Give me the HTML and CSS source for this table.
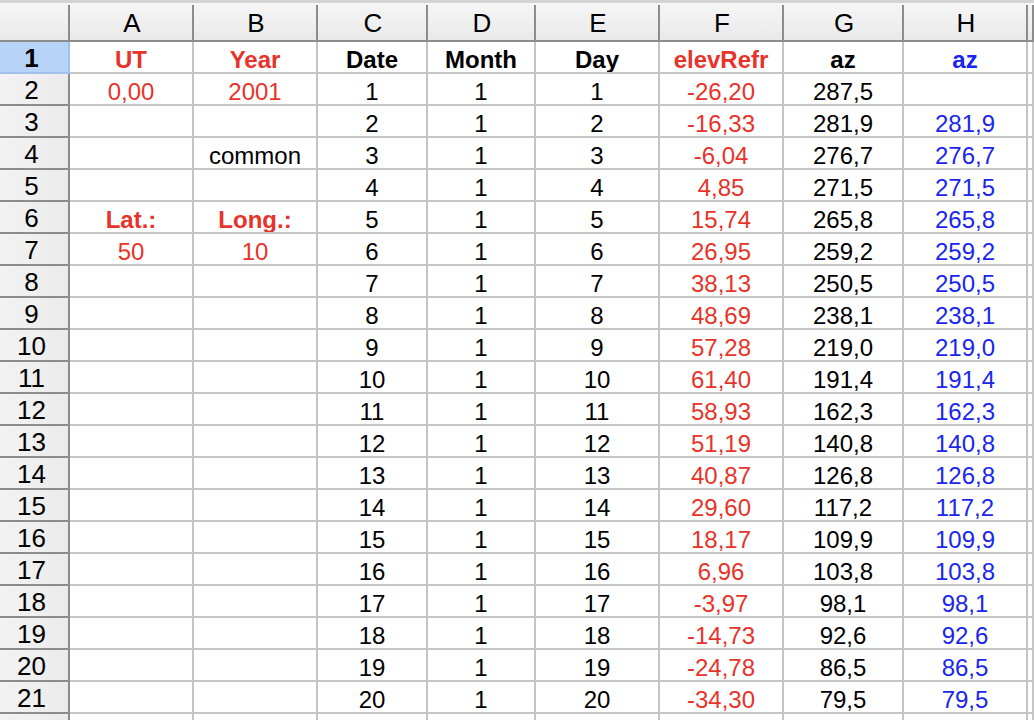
FILE: index.html
```html
<!DOCTYPE html>
<html>
<head>
<meta charset="utf-8">
<link rel="stylesheet" href="styles.css">
</head>
<body>
<div class="sheet">
  <div class="ch corner"></div>
  <div class="ch">A</div><div class="ch">B</div><div class="ch">C</div><div class="ch">D</div><div class="ch">E</div><div class="ch">F</div><div class="ch">G</div><div class="ch">H</div><div class="ch"></div>

  <div class="rh sel">1</div>
  <div class="c r bold">UT</div><div class="c r bold">Year</div><div class="c bold">Date</div><div class="c bold">Month</div><div class="c bold">Day</div><div class="c r bold">elevRefr</div><div class="c bold">az</div><div class="c bl bold">az</div><div class="c"></div>

  <div class="rh">2</div>
  <div class="c r">0,00</div><div class="c r">2001</div><div class="c">1</div><div class="c">1</div><div class="c">1</div><div class="c r">-26,20</div><div class="c">287,5</div><div class="c bl"></div><div class="c"></div>

  <div class="rh">3</div>
  <div class="c"></div><div class="c"></div><div class="c">2</div><div class="c">1</div><div class="c">2</div><div class="c r">-16,33</div><div class="c">281,9</div><div class="c bl">281,9</div><div class="c"></div>

  <div class="rh">4</div>
  <div class="c"></div><div class="c">common</div><div class="c">3</div><div class="c">1</div><div class="c">3</div><div class="c r">-6,04</div><div class="c">276,7</div><div class="c bl">276,7</div><div class="c"></div>

  <div class="rh">5</div>
  <div class="c"></div><div class="c"></div><div class="c">4</div><div class="c">1</div><div class="c">4</div><div class="c r">4,85</div><div class="c">271,5</div><div class="c bl">271,5</div><div class="c"></div>

  <div class="rh">6</div>
  <div class="c r bold">Lat.:</div><div class="c r bold">Long.:</div><div class="c">5</div><div class="c">1</div><div class="c">5</div><div class="c r">15,74</div><div class="c">265,8</div><div class="c bl">265,8</div><div class="c"></div>

  <div class="rh">7</div>
  <div class="c r">50</div><div class="c r">10</div><div class="c">6</div><div class="c">1</div><div class="c">6</div><div class="c r">26,95</div><div class="c">259,2</div><div class="c bl">259,2</div><div class="c"></div>

  <div class="rh">8</div>
  <div class="c"></div><div class="c"></div><div class="c">7</div><div class="c">1</div><div class="c">7</div><div class="c r">38,13</div><div class="c">250,5</div><div class="c bl">250,5</div><div class="c"></div>

  <div class="rh">9</div>
  <div class="c"></div><div class="c"></div><div class="c">8</div><div class="c">1</div><div class="c">8</div><div class="c r">48,69</div><div class="c">238,1</div><div class="c bl">238,1</div><div class="c"></div>

  <div class="rh">10</div>
  <div class="c"></div><div class="c"></div><div class="c">9</div><div class="c">1</div><div class="c">9</div><div class="c r">57,28</div><div class="c">219,0</div><div class="c bl">219,0</div><div class="c"></div>

  <div class="rh">11</div>
  <div class="c"></div><div class="c"></div><div class="c">10</div><div class="c">1</div><div class="c">10</div><div class="c r">61,40</div><div class="c">191,4</div><div class="c bl">191,4</div><div class="c"></div>

  <div class="rh">12</div>
  <div class="c"></div><div class="c"></div><div class="c">11</div><div class="c">1</div><div class="c">11</div><div class="c r">58,93</div><div class="c">162,3</div><div class="c bl">162,3</div><div class="c"></div>

  <div class="rh">13</div>
  <div class="c"></div><div class="c"></div><div class="c">12</div><div class="c">1</div><div class="c">12</div><div class="c r">51,19</div><div class="c">140,8</div><div class="c bl">140,8</div><div class="c"></div>

  <div class="rh">14</div>
  <div class="c"></div><div class="c"></div><div class="c">13</div><div class="c">1</div><div class="c">13</div><div class="c r">40,87</div><div class="c">126,8</div><div class="c bl">126,8</div><div class="c"></div>

  <div class="rh">15</div>
  <div class="c"></div><div class="c"></div><div class="c">14</div><div class="c">1</div><div class="c">14</div><div class="c r">29,60</div><div class="c">117,2</div><div class="c bl">117,2</div><div class="c"></div>

  <div class="rh">16</div>
  <div class="c"></div><div class="c"></div><div class="c">15</div><div class="c">1</div><div class="c">15</div><div class="c r">18,17</div><div class="c">109,9</div><div class="c bl">109,9</div><div class="c"></div>

  <div class="rh">17</div>
  <div class="c"></div><div class="c"></div><div class="c">16</div><div class="c">1</div><div class="c">16</div><div class="c r">6,96</div><div class="c">103,8</div><div class="c bl">103,8</div><div class="c"></div>

  <div class="rh">18</div>
  <div class="c"></div><div class="c"></div><div class="c">17</div><div class="c">1</div><div class="c">17</div><div class="c r">-3,97</div><div class="c">98,1</div><div class="c bl">98,1</div><div class="c"></div>

  <div class="rh">19</div>
  <div class="c"></div><div class="c"></div><div class="c">18</div><div class="c">1</div><div class="c">18</div><div class="c r">-14,73</div><div class="c">92,6</div><div class="c bl">92,6</div><div class="c"></div>

  <div class="rh">20</div>
  <div class="c"></div><div class="c"></div><div class="c">19</div><div class="c">1</div><div class="c">19</div><div class="c r">-24,78</div><div class="c">86,5</div><div class="c bl">86,5</div><div class="c"></div>

  <div class="rh">21</div>
  <div class="c"></div><div class="c"></div><div class="c">20</div><div class="c">1</div><div class="c">20</div><div class="c r">-34,30</div><div class="c">79,5</div><div class="c bl">79,5</div><div class="c"></div>

  <div class="rh"></div>
  <div class="c"></div><div class="c"></div><div class="c"></div><div class="c"></div><div class="c"></div><div class="c"></div><div class="c"></div><div class="c"></div><div class="c"></div>
</div>
</body>
</html>
```

FILE: styles.css
```css
html, body {
  margin: 0;
  padding: 0;
  background: #ffffff;
  overflow: hidden;
}

.sheet {
  display: grid;
  grid-template-columns: 70px 124px 124px 110px 108px 124px 124px 120px 124px 1fr;
  grid-auto-rows: 32px;
  grid-template-rows: 42px;
  width: 1034px;
  height: 720px;
  overflow: hidden;
  font-family: "Liberation Sans", Arial, sans-serif;
  color: #000;
}

.ch {
  box-sizing: border-box;
  height: 42px;
  border-top: 3px solid #d4d4d4;
  border-bottom: 2px solid #8c8c8c;
  padding-top: 7px;
  font-size: 26px;
  line-height: 26px;
  text-align: center;
  background:
    linear-gradient(#8c8c8c, #8c8c8c) right bottom / 2px 35px no-repeat,
    linear-gradient(#f6f6f6, #e9e9e9);
}

.rh {
  box-sizing: border-box;
  height: 32px;
  border-right: 2px solid #8c8c8c;
  border-bottom: 2px solid #8c8c8c;
  padding: 3px 5px 0 0;
  font-size: 26px;
  line-height: 26px;
  text-align: center;
  background: linear-gradient(to right, #f3f3f3, #ebebeb);
  overflow: hidden;
}

.rh.sel {
  background: #b8d3f8;
  border-right-color: #a3c0ec;
  border-bottom-color: #a3c0ec;
  font-weight: bold;
}

.c {
  box-sizing: border-box;
  height: 32px;
  border-right: 2px solid #c6c6c6;
  border-bottom: 2px solid #c6c6c6;
  padding-top: 6px;
  font-size: 24px;
  line-height: 24px;
  text-align: center;
  white-space: nowrap;
  overflow: hidden;
}

.r { color: #e8332a; }
.bl { color: #1a26ee; }
.bold { font-weight: bold; }
```
